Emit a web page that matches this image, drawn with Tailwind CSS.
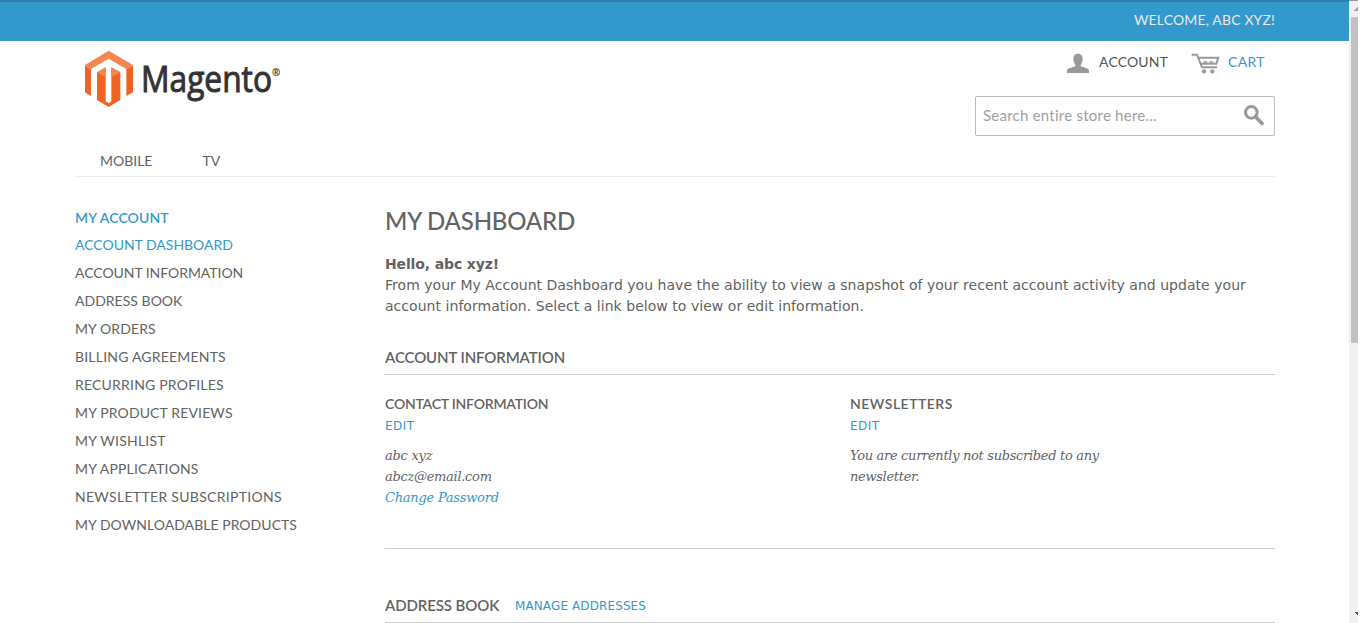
<!DOCTYPE html>
<html lang="en">
<head>
<meta charset="utf-8">
<title>My Dashboard</title>
<script src="https://cdn.jsdelivr.net/npm/@tailwindcss/browser@4"></script>
</head>
<body class="bg-white overflow-hidden">
<div class="flex h-[623px] w-[1358px] text-[#636363] font-['Lato',sans-serif] whitespace-nowrap">
  <div class="w-[1349px] h-full overflow-hidden">
    <div class="h-[41px] bg-[#3399cc] border-t-2 border-[#2b7fa9] pr-[74px] flex justify-end text-[14px] leading-[36px] text-[#e8e8e8]"><span class="tracking-[0.15px]">WELCOME, ABC XYZ!</span></div>
    <div class="w-[1201px] ml-[74px]">
      <header class="h-[136px] border-b border-[#ededed] flex justify-between">
        <div class="flex flex-col justify-between">
          <svg class="mt-[7px] ml-[6px]" width="210" height="60" viewBox="30 24 630 180">
            <path fill="#f26322" d="M45 76L63 87V168L45 157ZM189 76L169 87V168L189 157ZM81 97L107 82V184L116 190L124 184V82L151 97V180L116 201L81 180Z"/>
            <path fill="#f58650" d="M116 32L189 75L169 87L116 56L63 87L45 75ZM81 97L107 82V112ZM151 97L124 82V112Z"/>
            <text x="213" y="156" font-family="Open Sans" font-size="109" textLength="393" lengthAdjust="spacingAndGlyphs" fill="#333" stroke="#333" stroke-width="3">Magento</text>
            <text x="606" y="108" font-family="Open Sans" font-weight="700" font-size="30" fill="#222">®</text>
          </svg>
          <nav class="flex gap-[50px] ml-[26px] text-[14px] leading-[20px] mb-[5px]"><span>MOBILE</span><span>TV</span></nav>
        </div>
        <div class="w-[300px]">
          <div class="flex h-[55px] justify-end pr-[10px] text-[14px] leading-[20px] pt-[11px]">
            <svg width="24" height="22" viewBox="318 156 72 66" fill="#999"><path d="M354 161C364 161 368 168 368 176C368 185 365 190 362 194V199C371 203 387 204 387 212V219H321V212C321 204 338 203 346 199V194C343 190 340 185 340 176C340 168 344 161 354 161Z"/></svg>
            <span class="ml-[9px] text-[#555] tracking-[0.14px]">ACCOUNT</span>
            <svg class="ml-[23px]" width="29" height="22" viewBox="692 156 87 66" fill="none" stroke="#999" stroke-width="6"><path d="M694 164H710L725 202H770M715 173H774L768 191H722"/><path d="M729 186H741M747 186H759" stroke-width="5"/><circle cx="731" cy="214" r="6.5" fill="#999" stroke="none"/><circle cx="756" cy="214" r="6.5" fill="#999" stroke="none"/></svg>
            <span class="ml-[8px] text-[#3399cc] tracking-[0.36px]">CART</span>
          </div>
          <div class="h-[40px] border border-[#bbb] rounded-[2px] flex items-center justify-between pl-[7px] pr-[9px] pb-[2px] text-[15px] text-[#a0a0a0]"><span class="tracking-[0.24px]">Search entire store here...</span>
            <svg width="22" height="22" viewBox="851 312 66 66" fill="none" stroke="#999"><circle cx="876" cy="337" r="17.5" stroke-width="9"/><path d="M889 351L908 370" stroke-width="11" stroke-linecap="round"/></svg>
          </div>
        </div>
      </header>
      <div class="flex">
        <aside class="w-[311px] pt-[30px] pl-px text-[14px] leading-[28px]">
          <div class="text-[#3399cc] font-semibold leading-[21px] mb-[3px] tracking-[0.1px]">MY ACCOUNT</div>
          <div class="text-[#3399cc] tracking-[-0.02px]">ACCOUNT DASHBOARD</div>
          <div class="tracking-[-0.05px]">ACCOUNT INFORMATION</div>
          <div class="tracking-[0.02px]">ADDRESS BOOK</div>
          <div class="tracking-[0.1px]">MY ORDERS</div>
          <div class="tracking-[0.2px]">BILLING AGREEMENTS</div>
          <div class="tracking-[0.2px]">RECURRING PROFILES</div>
          <div class="tracking-[0.14px]">MY PRODUCT REVIEWS</div>
          <div class="tracking-[0.23px]">MY WISHLIST</div>
          <div class="tracking-[0.16px]">MY APPLICATIONS</div>
          <div class="tracking-[0.3px]">NEWSLETTER SUBSCRIPTIONS</div>
          <div class="tracking-[0.04px]">MY DOWNLOADABLE PRODUCTS</div>
        </aside>
        <main class="w-[890px]">
          <h1 class="pt-[28px] text-[24px] leading-[32px] font-medium tracking-[-0.19px]">MY DASHBOARD</h1>
          <div class="mt-[17px] font-['DejaVu_Sans',sans-serif] text-[14px] leading-[21px]">
            <p class="font-bold tracking-[-0.13px]">Hello, abc xyz!</p>
            <p class="tracking-[0.033px]">From your My Account Dashboard you have the ability to view a snapshot of your recent account activity and update your</p>
            <p class="tracking-[0.04px]">account information. Select a link below to view or edit information.</p>
          </div>
          <h2 class="mt-[30px] h-[28px] border-b border-[#ccc] text-[15px] leading-[20px] font-semibold tracking-[-0.12px]">ACCOUNT INFORMATION</h2>
          <div class="flex h-[174px] border-b border-[#ccc] pt-[19px]">
            <section class="w-[465px]">
              <h3 class="text-[14px] leading-[20px] font-semibold tracking-[-0.22px]">CONTACT INFORMATION</h3>
              <p class="mt-[2px] font-['DejaVu_Sans',sans-serif] text-[12px] leading-[21px] text-[#3399cc] tracking-[0.5px]">EDIT</p>
              <div class="mt-[8px] font-['DejaVu_Serif',serif] italic text-[13px] leading-[21px]">
                <p class="tracking-[-0.25px]">abc xyz</p>
                <p class="tracking-[-0.3px]">abcz@email.com</p>
                <p class="tracking-[-0.24px] text-[#3399cc]">Change Password</p>
              </div>
            </section>
            <section>
              <h3 class="text-[14px] leading-[20px] font-semibold tracking-[0.48px]">NEWSLETTERS</h3>
              <p class="mt-[2px] font-['DejaVu_Sans',sans-serif] text-[12px] leading-[21px] text-[#3399cc] tracking-[0.5px]">EDIT</p>
              <div class="mt-[8px] font-['DejaVu_Serif',serif] italic text-[13px] leading-[21px] tracking-[-0.31px]">
                <p>You are currently not subscribed to any</p>
                <p>newsletter.</p>
              </div>
            </section>
          </div>
          <div class="mt-[46px] h-[28px] border-b border-[#ccc] flex leading-[20px]">
            <h2 class="w-[115px] text-[15px] font-semibold tracking-[-0.1px]">ADDRESS BOOK</h2>
            <span class="ml-[15px] font-['DejaVu_Sans',sans-serif] text-[12px] leading-[22px] text-[#3399cc] tracking-[0.11px]">MANAGE ADDRESSES</span>
          </div>
        </main>
      </div>
    </div>
  </div>
  <div class="w-[9px] h-full bg-[#f1f1f1] flex flex-col items-end overflow-hidden">
    <svg width="9" height="17" viewBox="0 0 9 17" shape-rendering="crispEdges"><path d="M0 0H9V1H0Z" fill="#999"/><path d="M9 6V11H5V10Z" fill="#a3a3a3"/></svg>
    <div class="w-[7px] h-[326px] bg-[#c1c1c1]"></div>
    <svg class="mt-auto mb-[7px]" width="9" height="4" viewBox="0 0 9 4" shape-rendering="crispEdges"><path d="M5 0H9V4Z" fill="#505050"/></svg>
  </div>
</div>
</body>
</html>
